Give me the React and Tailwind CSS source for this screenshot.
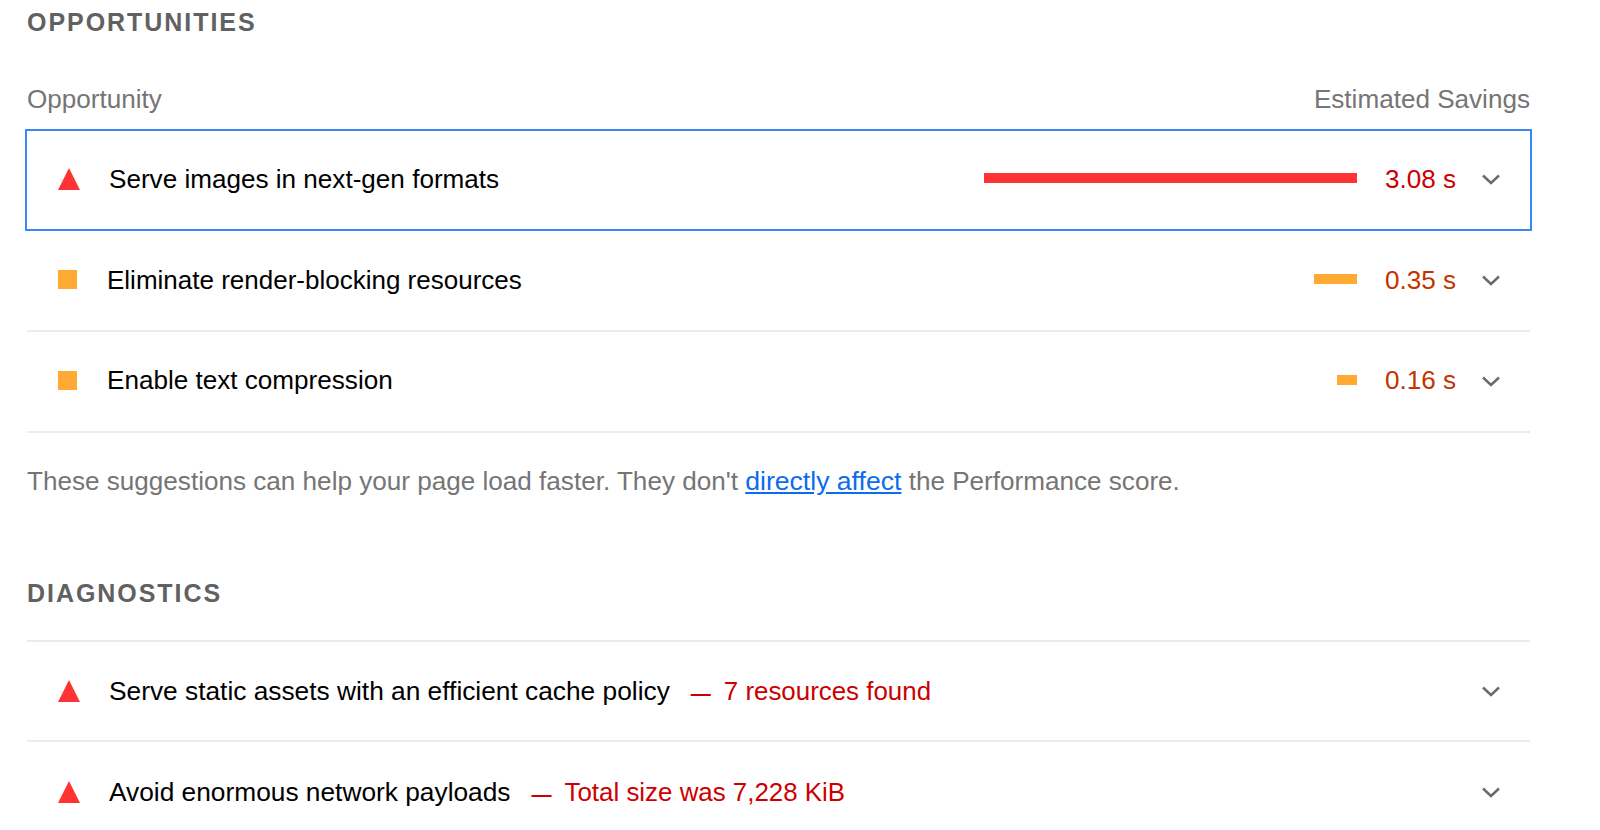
const Triangle = ({ className = '' }) => (
    <svg className={`w-[22px] h-[22px] shrink-0 ${className}`} viewBox="0 0 22 22">
        <polygon points="11,0 22,22 0,22" fill="#ff3333" />
    </svg>
);

const Square = () => <div className="w-[19px] h-[19px] shrink-0 mb-[2px] bg-[#ffaa33]"></div>;

const Chevron = () => (
    <svg className="w-[18px] h-[11px] shrink-0" viewBox="0 0 18 11" fill="none" stroke="#6a6a6a" strokeWidth="2.4">
        <polyline points="1,1.5 9,9 17,1.5" />
    </svg>
);

const SavingsRow = ({ icon, title, titleClass, barClass, value, valueClass, rowClass }) => (
    <div className={`flex items-center ${rowClass}`}>
        <div className="w-[30px] mr-[21px] flex">{icon}</div>
        <div className={`flex-1 ${titleClass}`}>{title}</div>
        <div className={`h-[10px] ${barClass}`}></div>
        <div className={`w-[99px] text-right ${valueClass}`}>{value}</div>
        <div className="ml-[26px] mr-[30px]">
            <Chevron />
        </div>
    </div>
);

const DiagnosticRow = ({ title, detail, rowClass }) => (
    <div className={`flex items-center pl-[31px] border-b-2 border-[#ebebeb] ${rowClass}`}>
        <div className="w-[51px]">
            <Triangle />
        </div>
        <div className="flex-1 pt-[2px] text-black text-[26.3px]">
            {title}
            <span className="text-[#cc0000] text-[20px] font-bold ml-[21px] mr-[13px]">—</span>
            <span className="text-[#cc0000] text-[25.9px]">{detail}</span>
        </div>
        <div className="mr-[30px]">
            <Chevron />
        </div>
    </div>
);

export default function App() {
    return (
        <div className="h-[830px] overflow-hidden bg-white font-['Liberation_Sans',Arial,sans-serif] text-[26.1px]">
            <div className="ml-[27px] w-[1503px]">
                {/* Opportunities */}
                <div className="h-[45px] flex items-center font-bold text-[#616161] text-[25px] tracking-[1.95px]">OPPORTUNITIES</div>
                <div className="mt-[37px] mb-[11px] h-[36px] flex items-center justify-between text-[#757575]">
                    <span>Opportunity</span>
                    <span>Estimated Savings</span>
                </div>

                <div className="-mx-[2px] h-[102px] border-2 border-[#3a88f5] pl-[31px] pb-[1px]">
                    <SavingsRow
                        rowClass="h-full"
                        icon={<Triangle className="mb-[1px]" />}
                        title="Serve images in next-gen formats"
                        titleClass="text-black"
                        barClass="w-[373px] mb-[3px] bg-[#ff3333]"
                        value="3.08 s"
                        valueClass="text-[#cc0000]"
                    />
                </div>
                <div className="pl-[31px] border-b-2 border-[#ebebeb]">
                    <SavingsRow
                        rowClass="h-[99px]"
                        icon={<Square />}
                        title="Eliminate render-blocking resources"
                        titleClass="text-black text-[26px] -ml-[2px]"
                        barClass="w-[43px] mb-[4px] bg-[#ffaa33]"
                        value="0.35 s"
                        valueClass="text-[#c33300]"
                    />
                </div>
                <div className="pl-[31px] border-b-2 border-[#ebebeb]">
                    <SavingsRow
                        rowClass="h-[99px] pb-[1px]"
                        icon={<Square />}
                        title="Enable text compression"
                        titleClass="text-black -ml-[2px]"
                        barClass="w-[20px] mb-[3px] bg-[#ffaa33]"
                        value="0.16 s"
                        valueClass="text-[#c33300]"
                    />
                </div>
                <div className="h-[97px] flex items-center text-[#757575]">
                    <p>
                        These suggestions can help your page load faster. They don't{' '}
                        <a href="#" className="text-[#0b6cf0] underline text-[26.6px]">directly affect</a>{' '}
                        the Performance score.
                    </p>
                </div>

                {/* Diagnostics */}
                <div className="mt-[41px] mb-[23px] h-[46px] flex items-center font-bold text-[#616161] text-[25px] tracking-[1.95px]">DIAGNOSTICS</div>
                <div className="border-t-2 border-[#ebebeb]">
                    <DiagnosticRow rowClass="h-[100px]" title="Serve static assets with an efficient cache policy" detail="7 resources found" />
                    <DiagnosticRow rowClass="h-[102px]" title="Avoid enormous network payloads" detail="Total size was 7,228 KiB" />
                </div>
            </div>
        </div>
    );
}
